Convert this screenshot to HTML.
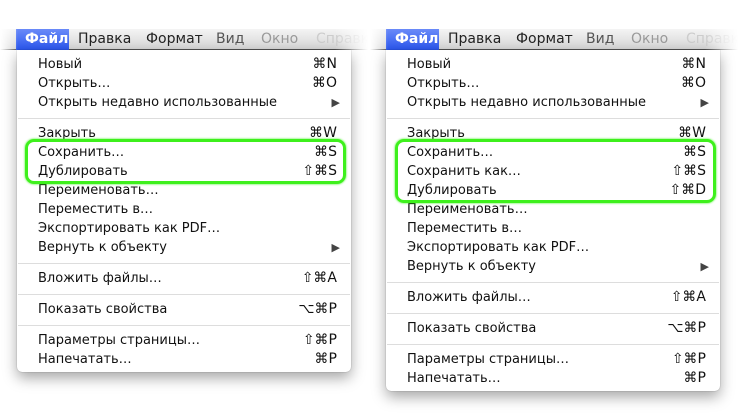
<!DOCTYPE html>
<html><head><meta charset="utf-8"><style>
*{margin:0;padding:0;box-sizing:border-box}
body{width:740px;height:420px;background:#fff;position:relative;overflow:hidden;font-family:"DejaVu Sans","Liberation Sans",sans-serif;font-size:13px;color:#111}
.bar{position:absolute;top:29px;height:21px;width:370px;background:linear-gradient(#f4f4f4,#d6d6d6);border-bottom:1px solid #555;
 -webkit-mask-image:linear-gradient(90deg,transparent 0,#000 18px,#000 335px,transparent 368px);mask-image:linear-gradient(90deg,transparent 0,#000 18px,#000 335px,transparent 368px)}
.bar span{position:absolute;top:2px;font-size:14px;color:#222}
.bar .sel{top:0;height:21px;left:16px;width:53px;background:linear-gradient(#6a8af8,#2a56ee);color:#fff;font-weight:bold;padding:2px 0 0 9px}
.menu{position:absolute;top:50px;width:334px;background:#fff;border-radius:0 0 5px 5px;box-shadow:0 6px 14px rgba(0,0,0,.35),0 0 1px rgba(0,0,0,.4);padding:5px 0 3px}
.it{height:19px;line-height:19px;padding-left:21px;position:relative;white-space:nowrap}
.it b{position:absolute;right:14px;top:0;font-weight:normal;font-size:14px}
.it i{position:absolute;right:11px;top:0;font-style:normal;font-size:11px;color:#444}
.sep{height:12px;position:relative}
.sep:after{content:"";position:absolute;left:1px;right:1px;top:6px;border-top:1px solid #ddd}
.g{position:absolute;border:3px solid #3ef01c;border-radius:9px;box-shadow:0 0 2px #3ef01c}
</style></head><body>

<div class="bar" style="left:0">
<span class="sel">Файл</span><span style="left:78px">Правка</span><span style="left:146px">Формат</span><span style="left:216px;color:#555">Вид</span><span style="left:261px;color:#999">Окно</span><span style="left:316px;color:#ccc">Справка</span>
</div>
<div class="menu" style="left:17px">
<div class="it">Новый<b>⌘N</b></div>
<div class="it">Открыть…<b>⌘O</b></div>
<div class="it">Открыть недавно использованные<i>▶</i></div>
<div class="sep"></div>
<div class="it">Закрыть<b>⌘W</b></div>
<div class="it">Сохранить…<b>⌘S</b></div>
<div class="it">Дублировать<b>⇧⌘S</b></div>
<div class="it">Переименовать…</div>
<div class="it">Переместить в…</div>
<div class="it">Экспортировать как PDF…</div>
<div class="it">Вернуть к объекту<i>▶</i></div>
<div class="sep"></div>
<div class="it">Вложить файлы…<b>⇧⌘A</b></div>
<div class="sep"></div>
<div class="it">Показать свойства<b>⌥⌘P</b></div>
<div class="sep"></div>
<div class="it">Параметры страницы…<b>⇧⌘P</b></div>
<div class="it">Напечатать…<b>⌘P</b></div>
</div>
<div class="g" style="left:25px;top:139px;width:321px;height:45px"></div>

<div class="bar" style="left:370px">
<span class="sel">Файл</span><span style="left:78px">Правка</span><span style="left:146px">Формат</span><span style="left:216px;color:#555">Вид</span><span style="left:261px;color:#999">Окно</span><span style="left:316px;color:#ccc">Справка</span>
</div>
<div class="menu" style="left:386px">
<div class="it">Новый<b>⌘N</b></div>
<div class="it">Открыть…<b>⌘O</b></div>
<div class="it">Открыть недавно использованные<i>▶</i></div>
<div class="sep"></div>
<div class="it">Закрыть<b>⌘W</b></div>
<div class="it">Сохранить…<b>⌘S</b></div>
<div class="it">Сохранить как…<b>⇧⌘S</b></div>
<div class="it">Дублировать<b>⇧⌘D</b></div>
<div class="it">Переименовать…</div>
<div class="it">Переместить в…</div>
<div class="it">Экспортировать как PDF…</div>
<div class="it">Вернуть к объекту<i>▶</i></div>
<div class="sep"></div>
<div class="it">Вложить файлы…<b>⇧⌘A</b></div>
<div class="sep"></div>
<div class="it">Показать свойства<b>⌥⌘P</b></div>
<div class="sep"></div>
<div class="it">Параметры страницы…<b>⇧⌘P</b></div>
<div class="it">Напечатать…<b>⌘P</b></div>
</div>
<div class="g" style="left:395px;top:139px;width:321px;height:64px"></div>
</body></html>
